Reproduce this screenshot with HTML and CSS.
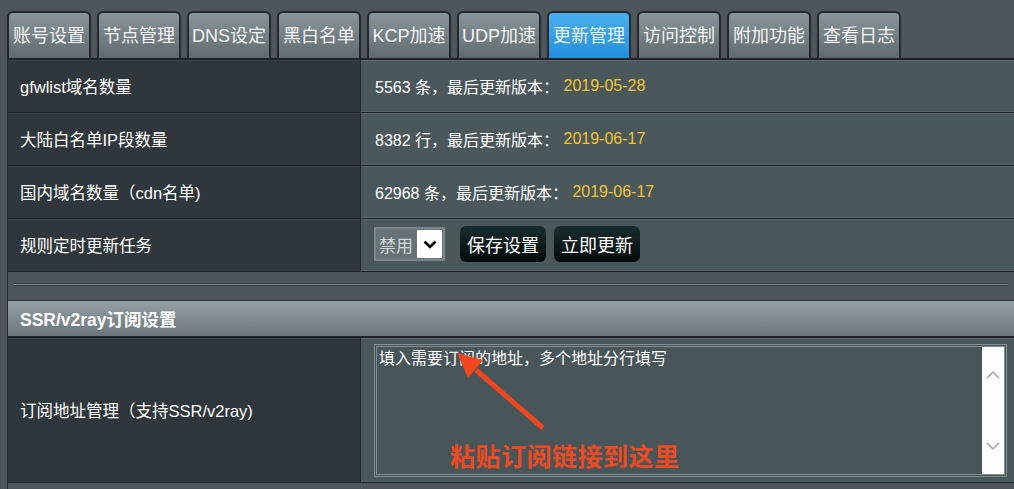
FILE: index.html
```html
<!DOCTYPE html>
<html lang="zh-CN">
<head>
<meta charset="utf-8">
<title>更新管理</title>
<link rel="stylesheet" href="styles.css">
</head>
<body>
<nav class="tabs">
  <div class="tab">账号设置</div>
  <div class="tab">节点管理</div>
  <div class="tab">DNS设定</div>
  <div class="tab">黑白名单</div>
  <div class="tab">KCP加速</div>
  <div class="tab">UDP加速</div>
  <div class="tab active">更新管理</div>
  <div class="tab">访问控制</div>
  <div class="tab">附加功能</div>
  <div class="tab">查看日志</div>
</nav>
<main class="content">
  <section class="form-table">
    <div class="row">
      <div class="th">gfwlist域名数量</div>
      <div class="td">5563 条，最后更新版本：&nbsp;<span class="date">2019-05-28</span></div>
    </div>
    <div class="row">
      <div class="th">大陆白名单IP段数量</div>
      <div class="td">8382 行，最后更新版本：&nbsp;<span class="date">2019-06-17</span></div>
    </div>
    <div class="row">
      <div class="th">国内域名数量（cdn名单)</div>
      <div class="td">62968 条，最后更新版本：&nbsp;<span class="date">2019-06-17</span></div>
    </div>
    <div class="row">
      <div class="th">规则定时更新任务</div>
      <div class="td controls">
        <div class="select">
          <span class="sel-text">禁用</span>
          <span class="sel-btn"><svg width="14" height="9" viewBox="0 0 14 9"><path d="M1.5 1.5 L7 7 L12.5 1.5" fill="none" stroke="#000" stroke-width="2.6"/></svg></span>
        </div>
        <button class="btn first">保存设置</button>
        <button class="btn">立即更新</button>
      </div>
    </div>
  </section>
  <div class="split-line"></div>
  <section class="form-table sub">
    <div class="caption">SSR/v2ray订阅设置</div>
    <div class="row tall">
      <div class="th">订阅地址管理（支持SSR/v2ray)</div>
      <div class="td top">
        <div class="ta">
          <textarea placeholder="填入需要订阅的地址，多个地址分行填写"></textarea>
          <div class="sbar">
            <svg width="14" height="9" viewBox="0 0 14 9"><path d="M1 8 L7 2 L13 8" fill="none" stroke="#b4b4b4" stroke-width="1.8"/></svg>
            <svg width="14" height="9" viewBox="0 0 14 9"><path d="M1 1 L7 7 L13 1" fill="none" stroke="#b4b4b4" stroke-width="1.8"/></svg>
          </div>
          <svg class="arrow" width="200" height="100" viewBox="0 0 200 100">
            <line x1="166" y1="81" x2="99" y2="23" stroke="#f2461e" stroke-width="5"/>
            <polygon points="80,6 106,13 91,31" fill="#f2461e"/>
          </svg>
          <div class="note">粘贴订阅链接到这里</div>
        </div>
      </div>
    </div>
  </section>
</main>
</body>
</html>
```
FILE: styles.css
```css
html, body {
  margin: 0;
  padding: 0;
  overflow: hidden;
}
body {
  background: #4e565c;
  font-family: "Liberation Sans", "Noto Sans CJK SC", sans-serif;
  color: #fff;
  width: 1014px;
  height: 489px;
}
.tabs {
  display: flex;
  gap: 6px;
  padding: 11px 0 0 7px;
  height: 47px;
}
.tab {
  box-sizing: border-box;
  width: 84px;
  height: 47px;
  border: 2px solid #23292c;
  border-bottom: 0;
  border-radius: 6px 6px 0 0;
  background: linear-gradient(#8a9599, #606b6f);
  display: flex;
  align-items: center;
  justify-content: center;
  font-size: 18px;
  color: #f2f4f4;
  padding-bottom: 3px;
  white-space: nowrap;
}
.tab.active {
  background: linear-gradient(#47aff0, #2590dc);
}
.content {
  margin-left: 7px;
  border-left: 1px solid #262d31;
  width: 1020px;
  min-height: 431px;
}
.form-table {
  border-top: 2px solid #1d2326;
}
.row {
  display: grid;
  grid-template-columns: 353px 1fr;
  height: 53px;
  box-sizing: border-box;
  border-bottom: 1px solid #1e2528;
}
.th {
  background: #2f373c;
  border-right: 1px solid #222a2e;
  padding-left: 12px;
  display: flex;
  align-items: center;
  font-size: 16.5px;
  box-shadow: inset 0 1px 0 #3a4348;
  white-space: nowrap;
}
.td {
  background: #4a575b;
  padding-left: 14px;
  display: flex;
  align-items: center;
  font-size: 16px;
  box-shadow: inset 0 1px 0 #5d6b70, inset 0 -1px 0 #56646a;
  white-space: nowrap;
}
.date {
  color: #f2c431;
}
.controls {
  gap: 8px;
}
.select {
  display: flex;
  box-sizing: border-box;
  width: 71px;
  height: 34px;
  border: 2px solid #7b878b;
  background: #667276;
  margin-left: -1px;
  margin-top: -2px;
}
.sel-text {
  flex: 1;
  display: flex;
  align-items: center;
  padding-left: 3px;
  color: #d0d7da;
  font-size: 17px;
}
.sel-btn {
  width: 25px;
  margin: 1px 1px 1px 0;
  background: #fff;
  display: flex;
  align-items: center;
  justify-content: center;
}
.btn {
  height: 36px;
  border: 0;
  border-radius: 6px;
  padding: 0 7px;
  margin-top: -2px;
  background: linear-gradient(#1a2d2e, #040a0a);
  color: #fff;
  font-family: "Liberation Sans", "Noto Sans CJK SC", sans-serif;
  font-size: 18px;
}
.btn.first {
  margin-left: 7px;
}
.split-line {
  margin: 11px 0 14px 6px;
  width: 994px;
  height: 1px;
  background: #7c888c;
  border-top: 1px solid #353d42;
  border-bottom: 1px solid #353d42;
}
.sub {
  border-top: 1px solid #2a3236;
}
.caption {
  height: 37px;
  box-sizing: border-box;
  background: linear-gradient(#95a0a4, #69757a);
  border-bottom: 2px solid #1e2528;
  padding-left: 12px;
  display: flex;
  align-items: center;
  font-size: 17.5px;
  font-weight: bold;
}
.row.tall {
  height: 145px;
}
.td.top {
  align-items: flex-start;
  padding: 6px 0 0 13px;
}
.ta {
  position: relative;
  display: flex;
  box-sizing: border-box;
  width: 633px;
  height: 133px;
  border: 3px double #818e92;
  background: #48565a;
}
.ta textarea {
  flex: 1;
  background: transparent;
  border: 0;
  outline: none;
  resize: none;
  padding: 0 2px;
  margin: 0;
  color: #fff;
  font-family: "Noto Sans CJK SC", sans-serif;
  font-size: 16px;
  line-height: 20px;
  overflow: hidden;
}
.ta textarea::placeholder {
  color: #fff;
  opacity: 1;
}
.sbar {
  width: 22px;
  background: #fdfdfd;
  display: flex;
  flex-direction: column;
  justify-content: space-between;
  align-items: center;
  padding: 23px 0;
  box-sizing: border-box;
}
.arrow {
  position: absolute;
  left: 0;
  top: 0;
  overflow: visible;
  pointer-events: none;
}
.note {
  position: absolute;
  left: 73px;
  top: 93px;
  line-height: 30px;
  font-size: 25px;
  font-weight: bold;
  color: #f04a22;
  letter-spacing: 0.5px;
  font-family: "Noto Sans CJK SC", sans-serif;
  white-space: nowrap;
}
```
